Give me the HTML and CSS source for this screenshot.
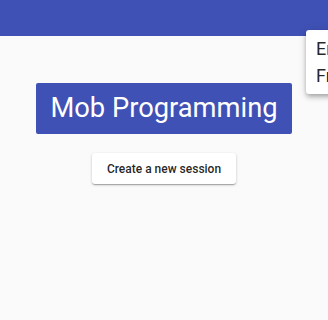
FILE: index.html
```html
<!DOCTYPE html>
<html>
<head>
<meta charset="utf-8">
<link rel="stylesheet" href="styles.css">
</head>
<body>
<header class="toolbar"></header>
<main class="content">
  <h1 class="title">Mob Programming</h1>
  <button class="btn">Create a new session</button>
</main>
<div class="menu">
  <div class="menu-item">English</div>
  <div class="menu-item">French</div>
</div>
</body>
</html>
```
FILE: styles.css
```css
html, body {
  margin: 0;
  padding: 0;
}
body {
  background: #fafafa;
  font-family: Roboto, "Noto Sans", sans-serif;
  width: 328px;
  height: 320px;
  overflow: hidden;
  position: relative;
}
.toolbar {
  height: 36px;
  background: #3f51b5;
}
.content {
  display: flex;
  flex-direction: column;
  align-items: center;
  padding-top: 47px;
}
.title {
  margin: 0;
  background: #3f51b5;
  color: #fff;
  font-weight: 400;
  font-size: 27.3px;
  line-height: 51px;
  padding: 0 14.5px;
  border-radius: 2px;
}
.btn {
  margin-top: 19px;
  height: 31px;
  padding: 0 15px;
  border: none;
  border-radius: 3px;
  background: #fff;
  color: rgba(0,0,0,.87);
  font-family: Roboto, sans-serif;
  font-weight: 500;
  font-size: 12px;
  box-shadow: 0 1px 3px rgba(0,0,0,.2), 0 1px 1px rgba(0,0,0,.14), 0 2px 1px -1px rgba(0,0,0,.12);
}
.menu {
  position: absolute;
  left: 306px;
  top: 30px;
  width: 120px;
  padding: 5px 0;
  background: #fff;
  border-radius: 3px;
  box-shadow: 0 2px 4px -1px rgba(0,0,0,.2), 0 4px 5px 0 rgba(0,0,0,.14), 0 1px 10px 0 rgba(0,0,0,.12);
}
.menu-item {
  padding: 0 10px;
  line-height: 27px;
  font-size: 18px;
  color: rgba(0,0,0,.87);
}
```
